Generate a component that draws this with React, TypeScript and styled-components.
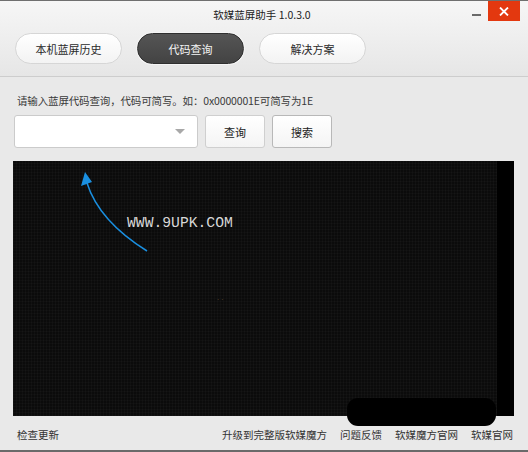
import React from "react";
import styled, { createGlobalStyle } from "styled-components";

const Global = createGlobalStyle`
  html, body { margin: 0; padding: 0; background: #e9e9e9; }
  body { font-family: "Noto Sans CJK SC", "Noto Sans", sans-serif; }
  * { box-sizing: border-box; }
`;

const Window = styled.div`
  width: 528px;
  height: 452px;
  border-top: 1px solid #6f6f6f;
  border-bottom: 2px solid #6a6a6a;
  background: #e9e9e9;
  display: flex;
  flex-direction: column;
  position: relative;
  overflow: hidden;
`;

const Header = styled.div`
  height: 76px;
  background: linear-gradient(#f6f6f6, #e6e6e6);
  border-bottom: 1px solid #cdcdcd;
  display: flex;
  flex-direction: column;
`;

const TitleBar = styled.div`
  height: 27px;
  display: grid;
  grid-template-columns: 1fr auto 1fr;
`;

const Title = styled.div`
  grid-column: 2;
  font-size: 10.5px;
  line-height: 27px;
  color: #222;
  margin-left: -4px;
`;

const Controls = styled.div`
  grid-column: 3;
  display: flex;
  justify-content: flex-end;
  align-items: flex-start;
  padding-right: 8px;
`;

const MinButton = styled.div`
  width: 16px;
  height: 20px;
  margin-right: 4px;
  display: flex;
  align-items: flex-end;
  justify-content: center;
  padding-bottom: 5px;
  &::before {
    content: "";
    width: 9px;
    height: 2px;
    background: #6a6a6a;
  }
`;

const CloseButton = styled.div`
  width: 32px;
  height: 20px;
  background: #e3380f;
  display: flex;
  align-items: center;
  justify-content: center;
`;

const Tabs = styled.div`
  margin-top: 5px;
  padding-left: 15px;
  display: flex;
  gap: 15px;
`;

const Tab = styled.div<{ $active?: boolean }>`
  width: 107px;
  height: 31px;
  border-radius: 16px;
  display: flex;
  align-items: center;
  justify-content: center;
  font-size: 11px;
  color: ${(p) => (p.$active ? "#f4f4f4" : "#2a2a2a")};
  background: ${(p) =>
    p.$active ? "linear-gradient(#555, #434343)" : "linear-gradient(#ffffff, #f3f3f3)"};
  border: 1px solid ${(p) => (p.$active ? "#2f2f2f" : "#d6d6d6")};
  box-shadow: ${(p) => (p.$active ? "0 0 0 1px #f4f4f4" : "none")};
`;

const Content = styled.div`
  flex: 1;
  padding: 16px 15px 0 13px;
  display: flex;
  flex-direction: column;
`;

const Hint = styled.div`
  margin-left: 4px;
  font-size: 10.5px;
  line-height: 16px;
  color: #3a3a3a;
  letter-spacing: -0.15px;
`;

const QueryRow = styled.div`
  margin-top: 6px;
  margin-left: 1px;
  display: flex;
  gap: 7px;
  height: 33px;
`;

const Combo = styled.div`
  width: 184px;
  background: #fff;
  border: 1px solid #cbcbcb;
  border-radius: 3px;
  display: flex;
  align-items: center;
  justify-content: flex-end;
  padding-right: 12px;
  &::after {
    content: "";
    border-left: 5px solid transparent;
    border-right: 5px solid transparent;
    border-top: 5px solid #a8a8a8;
  }
`;

const Button = styled.div<{ $strong?: boolean }>`
  width: 60px;
  background: linear-gradient(#ffffff, #f4f4f4);
  border: 1px solid ${(p) => (p.$strong ? "#b8b8b8" : "#cfcfcf")};
  border-radius: 3px;
  display: flex;
  align-items: center;
  justify-content: center;
  font-size: 11px;
  color: #222;
`;

const Screen = styled.div`
  margin-top: 13px;
  margin-right: -1px;
  height: 255px;
  position: relative;
  background-color: #0b0b0b;
  background-image:
    linear-gradient(to right, transparent 484px, #000 484px),
    repeating-linear-gradient(90deg, rgba(255,255,255,0.025) 0 1px, transparent 1px 3px),
    repeating-linear-gradient(0deg, rgba(255,255,255,0.02) 0 1px, transparent 1px 3px);
`;

const Watermark = styled.div`
  position: absolute;
  left: 114px;
  top: 53px;
  font-family: "Liberation Mono", "DejaVu Sans Mono", monospace;
  font-size: 14.7px;
  line-height: 18px;
  color: #d8d8d8;
`;

const Arrow = styled.svg`
  position: absolute;
  left: 0;
  top: 0;
`;

const Dots = styled.div`
  position: absolute;
  left: 204px;
  top: 130px;
  font-size: 8px;
  color: #4a3a2a;
  letter-spacing: 2px;
`;

const Footer = styled.div`
  flex: 1;
  display: flex;
  align-items: center;
  padding: 2px 0 0 4px;
  font-size: 10.5px;
  color: #333;
`;

const Links = styled.div`
  margin-left: auto;
  display: flex;
  gap: 13px;
`;

const Redaction = styled.div`
  position: absolute;
  left: 347px;
  top: 397px;
  width: 149px;
  height: 28px;
  background: #000;
  border-radius: 11px;
`;

export default function App() {
  return (
    <>
      <Global />
      <Window>
        <Header>
          <TitleBar>
            <Title>软媒蓝屏助手 1.0.3.0</Title>
            <Controls>
              <MinButton />
              <CloseButton>
                <svg width="10" height="9" viewBox="0 0 10 9">
                  <path d="M1 0.5 L9 8.5 M9 0.5 L1 8.5" stroke="#fff" strokeWidth="1.8" />
                </svg>
              </CloseButton>
            </Controls>
          </TitleBar>
          <Tabs>
            <Tab>本机蓝屏历史</Tab>
            <Tab $active>代码查询</Tab>
            <Tab>解决方案</Tab>
          </Tabs>
        </Header>
        <Content>
          <Hint>请输入蓝屏代码查询，代码可简写。如：0x0000001E可简写为1E</Hint>
          <QueryRow>
            <Combo />
            <Button>查询</Button>
            <Button $strong>搜索</Button>
          </QueryRow>
          <Screen>
            <Arrow width="200" height="120" viewBox="0 0 200 120">
              <path d="M134 90 Q86 60 74 22" stroke="#1a8fe0" strokeWidth="1.5" fill="none" />
              <polygon points="72,11 68,25 79,21" fill="#1a8fe0" />
            </Arrow>
            <Watermark>WWW.9UPK.COM</Watermark>
            <Dots>..</Dots>
          </Screen>
          <Footer>
            <span>检查更新</span>
            <Links>
              <span>升级到完整版软媒魔方</span>
              <span>问题反馈</span>
              <span>软媒魔方官网</span>
              <span>软媒官网</span>
            </Links>
          </Footer>
        </Content>
        <Redaction />
      </Window>
    </>
  );
}
